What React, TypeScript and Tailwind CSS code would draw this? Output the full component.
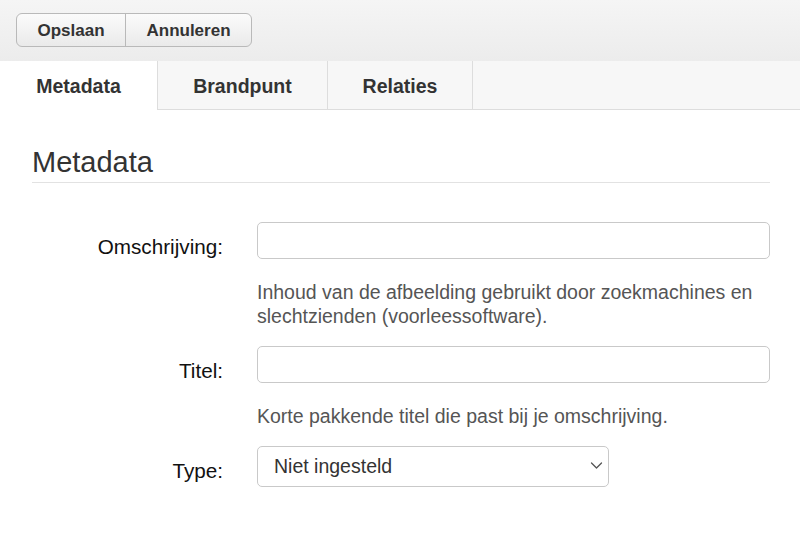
import React from "react";

export default function App() {
  const font = { fontFamily: '"Liberation Sans", Arial, Helvetica, sans-serif' };
  return (
    <div className="w-[800px] h-[554px] bg-white overflow-hidden" style={font}>
      {/* Toolbar */}
      <div className="h-[61px] bg-linear-to-b from-[#f5f5f5] to-[#ececec] pt-[13px] pl-[16px]">
        <div className="inline-flex h-[34px] rounded-[6px] border border-[#b9b9b9] bg-linear-to-b from-[#fbfbfb] to-[#eaeaea] overflow-hidden">
          <button className="h-full w-[109px] border-r border-[#b9b9b9] pt-[1px] text-[17px] font-bold text-[#333]">Opslaan</button>
          <button className="h-full w-[125px] pt-[1px] text-[17px] font-bold text-[#333]">Annuleren</button>
        </div>
      </div>

      {/* Tabs */}
      <div className="flex h-[49px] bg-[#f7f7f7]">
        <div className="w-[158px] bg-white border-r border-[#dddddd] pt-[3px] flex items-center justify-center text-[19.5px] font-bold text-[#333]">
          Metadata
        </div>
        <div className="w-[170px] border-r border-b border-[#dddddd] pt-[3px] flex items-center justify-center text-[19.5px] font-bold text-[#333]">
          Brandpunt
        </div>
        <div className="w-[145px] border-r border-b border-[#dddddd] pt-[3px] flex items-center justify-center text-[19.5px] font-bold text-[#333]">
          Relaties
        </div>
        <div className="flex-1 border-b border-[#dddddd]" />
      </div>

      {/* Content */}
      <div className="pl-[32px] pr-[30px]">
        <h1 className="mt-[33px] text-[29px] leading-[39px] font-normal text-[#333] border-b border-[#e2e2e2]">
          Metadata
        </h1>

        <div className="mt-[39px] flex flex-col">
          {/* Omschrijving */}
          <div className="flex items-start">
            <label className="w-[191px] text-right text-[20.7px] leading-[24px] pt-[13px] text-[#111]">Omschrijving:</label>
            <div className="ml-[34px] flex-1">
              <input className="block w-full h-[37px] rounded-[5px] border border-[#c9c9c9] bg-white outline-none" />
              <p className="mt-[21px] text-[19.5px] leading-[24px] text-[#555]">
                Inhoud van de afbeelding gebruikt door zoekmachines en slechtzienden (voorleessoftware).
              </p>
            </div>
          </div>

          {/* Titel */}
          <div className="mt-[18px] flex items-start">
            <label className="w-[191px] text-right text-[20.7px] leading-[24px] pt-[13px] text-[#111]">Titel:</label>
            <div className="ml-[34px] flex-1">
              <input className="block w-full h-[37px] rounded-[5px] border border-[#c9c9c9] bg-white outline-none" />
              <p className="mt-[21px] text-[19.5px] leading-[24px] text-[#555]">
                Korte pakkende titel die past bij je omschrijving.
              </p>
            </div>
          </div>

          {/* Type */}
          <div className="mt-[18px] flex items-start">
            <label className="w-[191px] text-right text-[20.7px] leading-[24px] pt-[13px] text-[#111]">Type:</label>
            <div className="ml-[34px] flex-1">
              <div className="relative w-[352px] h-[41px] rounded-[5px] border border-[#c9c9c9] bg-white flex items-center pl-[16px]">
                <span className="text-[19.5px] text-[#333]">Niet ingesteld</span>
                <svg className="absolute right-[5px] top-[14px]" width="13" height="9" viewBox="0 0 13 9" fill="none">
                  <path d="M1.5 2 L6.5 7 L11.5 2" stroke="#555" strokeWidth="1.3" strokeLinecap="round" strokeLinejoin="round" />
                </svg>
              </div>
            </div>
          </div>
        </div>
      </div>
    </div>
  );
}
